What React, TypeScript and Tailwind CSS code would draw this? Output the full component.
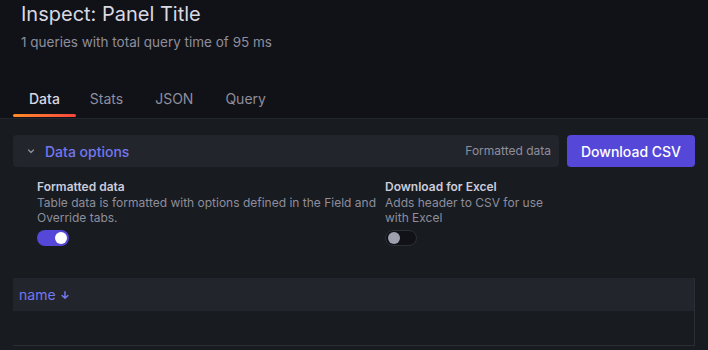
import React from 'react';

const tabs = ['Data', 'Stats', 'JSON', 'Query'];

function Switch({ on }: { on: boolean }) {
  return (
    <div
      className={`w-8 h-4 rounded-full flex items-center px-[2px] ${
        on ? 'bg-[#5548d9] justify-end' : 'bg-[#111217] border border-[#2c2f36] justify-start'
      }`}
    >
      <div className={`w-3 h-3 rounded-full ${on ? 'bg-white' : 'bg-[#9fa0ae]'}`} />
    </div>
  );
}

export default function App() {
  return (
    <div
      className="w-[708px] h-[350px] bg-[#181b1f] text-[#ccccdc] overflow-hidden"
      style={{ fontFamily: 'Inter, "Noto Sans", sans-serif' }}
    >
      <div className="bg-[#111217] border-b border-[#23262c] h-[119px] px-[13px]">
        <div className="pl-2 pt-[2px]">
          <h1 className="text-[20px] leading-6 text-[#d8d9e2]">Inspect: Panel Title</h1>
          <p className="mt-[6px] text-[13.5px] leading-5 text-[#8e8e9e]">1 queries with total query time of 95 ms</p>
        </div>
        <div className="flex mt-[37px]">
          {tabs.map((t, i) => (
            <div key={t} className="flex flex-col pl-4 pr-4 first:pr-[14px]">
              <span
                className={`text-[14px] leading-5 ${
                  i === 0 ? 'text-[#d8d9e2] font-medium' : 'text-[#8e8e9e]'
                }`}
              >
                {t}
              </span>
              <div
                className={`h-[3px] mt-[5px] -ml-4 -mr-4 rounded-sm ${
                  i === 0 ? 'bg-gradient-to-r from-[#ff8a25] to-[#f5443c]' : ''
                }`}
              />
            </div>
          ))}
        </div>
      </div>

      <div className="px-[13px] pt-4">
        <div className="flex gap-2">
          <div className="flex-1 h-8 bg-[#22252b] rounded-sm flex items-center pl-3 pr-2">
            <svg width="12" height="12" viewBox="0 0 24 24" fill="none" stroke="#8e8e9e" strokeWidth="2.5" strokeLinecap="round" strokeLinejoin="round">
              <path d="M7 10l5 5 5-5" />
            </svg>
            <span className="ml-[8px] text-[14px] font-medium text-[#7477f0]">Data options</span>
            <span className="ml-auto text-[12px] text-[#8e8e9e]">Formatted data</span>
          </div>
          <button className="w-[128px] h-8 bg-[#5548d9] rounded-sm text-[14px] font-medium text-white">
            Download CSV
          </button>
        </div>

        <div className="flex pl-6 pt-[12px]">
          <div className="w-[348px]">
            <div className="text-[12px] font-semibold leading-4 text-[#ccccdc]">Formatted data</div>
            <div className="text-[12px] leading-[15px] text-[#8e8e9e] w-[345px]">
              Table data is formatted with options defined in the Field and Override tabs.
            </div>
            <div className="mt-[5px]">
              <Switch on />
            </div>
          </div>
          <div className="w-[190px]">
            <div className="text-[12px] font-semibold leading-4 text-[#ccccdc]">Download for Excel</div>
            <div className="text-[12px] leading-[15px] text-[#8e8e9e] w-[180px]">
              Adds header to CSV for use with Excel
            </div>
            <div className="mt-[5px]">
              <Switch on={false} />
            </div>
          </div>
        </div>

        <div className="mt-[32px] w-[682px] border-r border-b border-[#2a2d33]">
          <div className="h-[33px] bg-[#22252b] flex items-center px-[6px]">
            <span className="text-[14px] text-[#7477f0]">name</span>
            <svg className="ml-[4px]" width="10" height="10" viewBox="0 0 24 24" fill="none" stroke="#7477f0" strokeWidth="3.5" strokeLinecap="round" strokeLinejoin="round">
              <path d="M12 4v16M5 13l7 7 7-7" />
            </svg>
          </div>
          <div className="h-[34px]" />
        </div>
      </div>
    </div>
  );
}
